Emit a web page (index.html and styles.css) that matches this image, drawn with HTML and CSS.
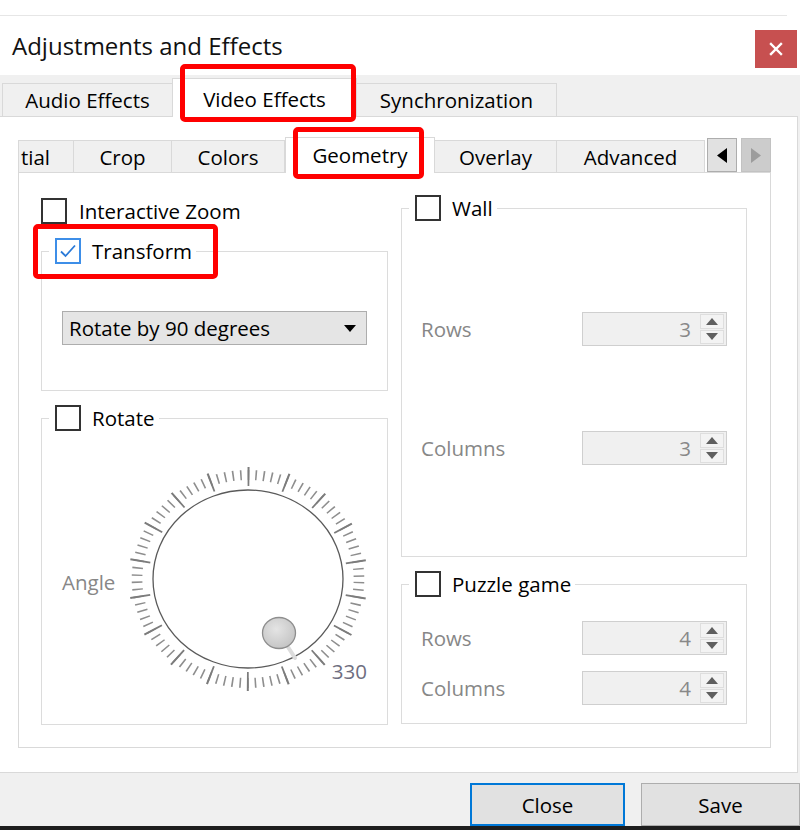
FILE: index.html
```html
<!DOCTYPE html>
<html lang="en">
<head>
<meta charset="utf-8">
<title>Adjustments and Effects</title>
<link rel="stylesheet" href="styles.css">
</head>
<body>
<div class="window">
  <div class="topline"></div>
  <div class="titlebar">
    <div class="title">Adjustments and Effects</div>
    <div class="close-x">
      <svg width="14" height="14" viewBox="0 0 14 14"><path d="M2 2 L12 12 M12 2 L2 12" stroke="#fff" stroke-width="2.4" stroke-linecap="square"/></svg>
    </div>
  </div>
  <div class="main">
    <div class="tabs1">
      <div class="tab1 t-audio">Audio Effects</div>
      <div class="tab1 t-video sel">Video Effects<span class="mark mark-video"></span></div>
      <div class="tab1 t-sync">Synchronization</div>
    </div>
    <div class="pane">
      <div class="tabs2">
        <div class="tab2 t-spatial first">tial</div>
        <div class="tab2 t-crop">Crop</div>
        <div class="tab2 t-colors">Colors</div>
        <div class="tab2 t-geom sel">Geometry<span class="mark mark-geom"></span></div>
        <div class="tab2 t-overlay">Overlay</div>
        <div class="tab2 t-adv">Advanced</div>
        <div class="sbtn sbtn-left"><svg width="10" height="15" viewBox="0 0 10 15"><path d="M10 0 L0 7.5 L10 15 Z" fill="#000"/></svg></div>
        <div class="sbtn sbtn-right"><svg width="10" height="15" viewBox="0 0 10 15"><path d="M0 0 L10 7.5 L0 15 Z" fill="#9c9c9c"/></svg></div>
      </div>
      <div class="inner">
        <div class="col col-left">
          <div class="check-row"><span class="cb"></span><span>Interactive Zoom</span></div>
          <fieldset class="group g-transform">
            <legend><span class="cb checked"><svg width="22" height="22" viewBox="0 0 22 22"><path d="M4 11.5 L8.5 16 L18 5.5" fill="none" stroke="#2a7ad8" stroke-width="1.8"/></svg></span><span>Transform</span><span class="mark mark-transform"></span></legend>
            <div class="group-body body-transform">
              <div class="select"><span>Rotate by 90 degrees</span><svg width="12" height="7" viewBox="0 0 12 7"><path d="M0 0 L12 0 L6 7 Z" fill="#000"/></svg></div>
            </div>
          </fieldset>
          <fieldset class="group g-rotate">
            <legend><span class="cb"></span><span>Rotate</span></legend>
            <div class="group-body body-rotate">
              <div class="dial-row">
                <span class="dim angle">Angle</span>
                <svg class="dial" width="250" height="240" viewBox="0 0 250 240">
                  <defs>
                    <radialGradient id="kg" cx="42%" cy="38%" r="65%">
                      <stop offset="0" stop-color="#e4e4e4"/>
                      <stop offset="1" stop-color="#c4c4c4"/>
                    </radialGradient>
                  </defs>
                  <g transform="translate(125 120) scale(1.067 1)" fill="none">
                    <circle r="104" stroke="#8e8e8e" stroke-width="10" stroke-dasharray="1.5 5.7606" stroke-dashoffset="-2.88"/>
                    <circle r="102.5" stroke="#7c7c7c" stroke-width="19" stroke-dasharray="1.8 33.979" stroke-dashoffset="-16.99"/>
                  </g>
                  <ellipse cx="125" cy="120" rx="95" ry="89" fill="#fff" stroke="#5a5a5a" stroke-width="1.3"/>
                  <line x1="165" y1="188" x2="172" y2="199" stroke="#dcdcdc" stroke-width="4" stroke-linecap="round"/>
                  <ellipse cx="156" cy="174" rx="16.5" ry="15.5" fill="url(#kg)" stroke="#8e8e8e" stroke-width="1.3"/>
                  <text x="244" y="220" text-anchor="end" class="dial-num">330</text>
                </svg>
              </div>
            </div>
          </fieldset>
        </div>
        <div class="col col-right">
          <fieldset class="group g-wall">
            <legend><span class="cb"></span><span>Wall</span></legend>
            <div class="group-body body-wall">
              <div class="spin-row">
                <span class="dim">Rows</span>
                <div class="spin"><span class="spin-val">3</span><div class="spin-btns"><span><svg width="12" height="7" viewBox="0 0 12 7"><path d="M0 7 L6 0 L12 7 Z" fill="#5f5f5f"/></svg></span><span><svg width="12" height="7" viewBox="0 0 12 7"><path d="M0 0 L12 0 L6 7 Z" fill="#5f5f5f"/></svg></span></div></div>
              </div>
              <div class="spin-row">
                <span class="dim">Columns</span>
                <div class="spin"><span class="spin-val">3</span><div class="spin-btns"><span><svg width="12" height="7" viewBox="0 0 12 7"><path d="M0 7 L6 0 L12 7 Z" fill="#5f5f5f"/></svg></span><span><svg width="12" height="7" viewBox="0 0 12 7"><path d="M0 0 L12 0 L6 7 Z" fill="#5f5f5f"/></svg></span></div></div>
              </div>
            </div>
          </fieldset>
          <fieldset class="group g-puzzle">
            <legend><span class="cb"></span><span>Puzzle game</span></legend>
            <div class="group-body body-puzzle">
              <div class="spin-row">
                <span class="dim">Rows</span>
                <div class="spin"><span class="spin-val">4</span><div class="spin-btns"><span><svg width="12" height="7" viewBox="0 0 12 7"><path d="M0 7 L6 0 L12 7 Z" fill="#5f5f5f"/></svg></span><span><svg width="12" height="7" viewBox="0 0 12 7"><path d="M0 0 L12 0 L6 7 Z" fill="#5f5f5f"/></svg></span></div></div>
              </div>
              <div class="spin-row">
                <span class="dim">Columns</span>
                <div class="spin"><span class="spin-val">4</span><div class="spin-btns"><span><svg width="12" height="7" viewBox="0 0 12 7"><path d="M0 7 L6 0 L12 7 Z" fill="#5f5f5f"/></svg></span><span><svg width="12" height="7" viewBox="0 0 12 7"><path d="M0 0 L12 0 L6 7 Z" fill="#5f5f5f"/></svg></span></div></div>
              </div>
            </div>
          </fieldset>
        </div>
      </div>
    </div>
    <div class="footer">
      <button class="btn btn-close">Close</button>
      <button class="btn btn-save">Save</button>
    </div>
  </div>
  <div class="bottom-strip"></div>
</div>
</body>
</html>
```

FILE: styles.css
```css
html, body {
  margin: 0;
  padding: 0;
}
body {
  width: 800px;
  height: 830px;
  overflow: hidden;
  background: #fff;
  font-family: "Open Sans", "Noto Sans", sans-serif;
  font-size: 20.5px;
  color: #000;
}
.window {
  display: flex;
  flex-direction: column;
  height: 830px;
}
.topline {
  flex: none;
  height: 15px;
  border-bottom: 1px solid #e6e6e6;
  margin-right: 13px;
}
.titlebar {
  flex: none;
  height: 59px;
  display: flex;
  justify-content: space-between;
  align-items: flex-start;
}
.title {
  margin: 14px 0 0 12px;
  font-size: 24px;
  line-height: 32px;
  color: #111;
}
.close-x {
  margin: 14px 3px 0 0;
  width: 42px;
  height: 38px;
  background: #c75050;
  display: flex;
  align-items: center;
  justify-content: center;
}
.main {
  flex: 1;
  background: #f0f0f0;
  display: flex;
  flex-direction: column;
}

/* first tab row */
.tabs1 {
  flex: none;
  height: 41px;
  display: flex;
  align-items: flex-end;
  padding-left: 2px;
}
.tab1 {
  position: relative;
  height: 33px;
  box-sizing: border-box;
  border: 1px solid #d9d9d9;
  border-bottom: none;
  background: #f0f0f0;
  display: flex;
  align-items: center;
  justify-content: center;
  white-space: nowrap;
}
.t-audio { width: 170px; border-right: none; }
.t-video {
  width: 185px;
  height: 39px;
  padding-top: 2px;
  background: #fff;
  margin-bottom: -1px;
  z-index: 2;
}
.t-sync { width: 200px; border-left: none; }

/* annotation boxes */
.mark {
  position: absolute;
  border: 5px solid #ff0000;
  border-radius: 5px;
  pointer-events: none;
  z-index: 5;
}
.mark-video { left: 7px; right: 0; top: -15px; bottom: -5px; }
.mark-geom { left: 7px; right: 10px; top: -11px; bottom: -6px; }
.mark-transform { left: -16px; right: -22px; top: -14px; bottom: -15px; }

/* tab pane */
.pane {
  flex: none;
  height: 657px;
  box-sizing: border-box;
  border: 1px solid #d9d9d9;
  border-left: none;
  margin-right: 2px;
  background: #fff;
  padding-left: 18px;
  display: flex;
  flex-direction: column;
}
.tabs2 {
  flex: none;
  height: 55px;
  display: flex;
  align-items: flex-end;
}
.tab2 {
  position: relative;
  height: 32px;
  box-sizing: border-box;
  border-top: 1px solid #d9d9d9;
  border-right: 1px solid #d9d9d9;
  background: #f0f0f0;
  display: flex;
  align-items: center;
  justify-content: center;
  white-space: nowrap;
}
.tab2.first { border-left: 1px solid #d9d9d9; }
.t-spatial {
  width: 56px;
  justify-content: flex-end;
  padding-right: 23px;
}
.t-crop { width: 98px; }
.t-colors { width: 113px; }
.t-geom {
  width: 150px;
  height: 36px;
  background: #fff;
  border-left: 1px solid #d9d9d9;
  margin-bottom: -1px;
  z-index: 2;
  padding-bottom: 2px;
}
.t-overlay { width: 122px; }
.t-adv { width: 148px; }
.sbtn {
  flex: none;
  width: 30px;
  height: 34px;
  box-sizing: border-box;
  display: flex;
  align-items: center;
  justify-content: center;
}
.sbtn-left {
  margin-left: 2px;
  background: #e1e1e1;
  border: 1px solid #adadad;
}
.sbtn-right {
  margin-left: 4px;
  background: #cccccc;
  border: 1px solid #c2c2c2;
}

/* inner pane */
.inner {
  flex: none;
  width: 753px;
  height: 576px;
  box-sizing: border-box;
  border: 1px solid #d9d9d9;
  padding: 22px 23px 0 22px;
  display: grid;
  grid-template-columns: 347px 346px;
  column-gap: 13px;
  align-items: start;
}
.col {
  display: flex;
  flex-direction: column;
}
.col-left { padding-top: 3px; }

.check-row {
  display: flex;
  align-items: center;
  gap: 12px;
  height: 26px;
}
.cb {
  flex: none;
  width: 26px;
  height: 26px;
  box-sizing: border-box;
  border: 2px solid #333;
  background: #fff;
  display: flex;
  align-items: center;
  justify-content: center;
}
.cb.checked { border-color: #3d8ee8; }

.group {
  margin: 0;
  padding: 0;
  min-width: 0;
  box-sizing: border-box;
  border: 1px solid #dcdcdc;
}
.group legend {
  position: relative;
  display: flex;
  align-items: center;
  gap: 11px;
  height: 26px;
  padding: 0 4px 0 6px;
  margin-left: 7px;
}
.g-transform, .g-rotate, .g-puzzle { margin-top: 14px; }

.body-transform { padding: 47px 20px 45px 20px; }
.select {
  height: 34px;
  box-sizing: border-box;
  background: #e5e5e5;
  border: 1px solid #adadad;
  display: flex;
  align-items: center;
  justify-content: space-between;
  padding: 0 10px 0 6px;
}

.body-rotate { padding: 28px 0 25px 20px; }
.dial-row {
  display: flex;
  align-items: center;
}
.dim { color: #878787; }
.angle {
  flex: none;
  width: 61px;
  margin-top: 6px;
}
.dial { flex: none; display: block; }
.dial-num {
  font-size: 20.5px;
  fill: #6e6e80;
}

.body-wall {
  padding: 91px 19px 91px 19px;
  display: flex;
  flex-direction: column;
  gap: 85px;
}
.body-puzzle {
  padding: 24px 19px 18px 19px;
  display: flex;
  flex-direction: column;
  gap: 16px;
}
.spin-row {
  display: flex;
  align-items: center;
  justify-content: space-between;
  height: 34px;
}
.spin {
  width: 145px;
  height: 34px;
  box-sizing: border-box;
  border: 1px solid #cfcfcf;
  background: #f0f0f0;
  display: flex;
  align-items: center;
}
.spin-val {
  flex: 1;
  text-align: right;
  padding-right: 9px;
  color: #888;
}
.spin-btns {
  width: 24px;
  height: 30px;
  margin-right: 2px;
  display: flex;
  flex-direction: column;
  gap: 1px;
}
.spin-btns span {
  flex: 1;
  box-sizing: border-box;
  border: 1px solid #dedede;
  background: #f3f3f3;
  display: flex;
  align-items: center;
  justify-content: center;
}

/* footer */
.footer {
  flex: 1;
  display: flex;
  justify-content: flex-end;
  align-items: flex-start;
  padding-top: 10px;
  gap: 16px;
}
.btn {
  height: 43px;
  box-sizing: border-box;
  font: inherit;
  color: #000;
  background: #e1e1e1;
  border: 1px solid #adadad;
  padding: 0;
  margin: 0;
}
.btn-close {
  width: 155px;
  border: 2px solid #0078d7;
}
.btn-save { width: 159px; }
.bottom-strip {
  flex: none;
  height: 4px;
  background: #1e1e1e;
}
```
